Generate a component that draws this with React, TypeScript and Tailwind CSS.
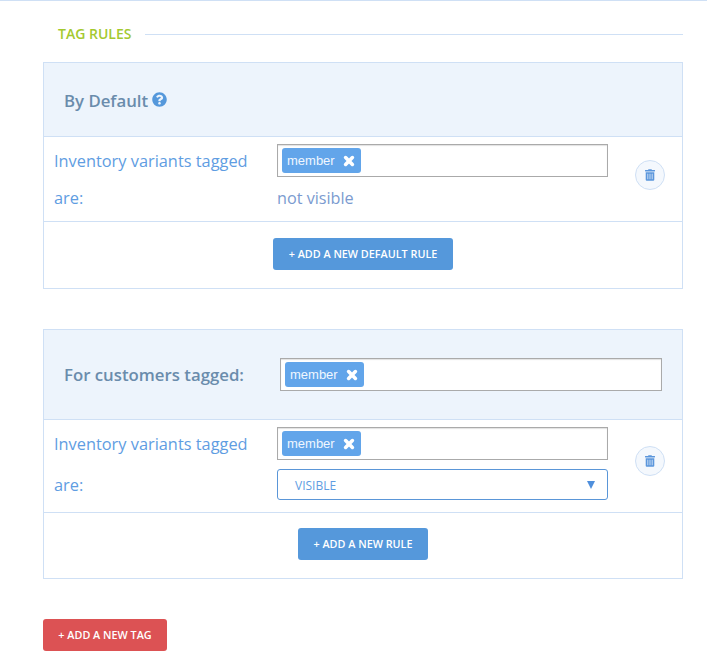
import { FaTrashAlt, FaQuestionCircle } from "react-icons/fa";

const OS = "font-['Open_Sans',sans-serif]";

function Tag() {
  return (
    <span className="flex h-[25px] w-[79px] items-center rounded-[3px] bg-[#62a5ea] pl-[5px] font-['Liberation_Sans',sans-serif] text-[13px] text-[#f0f7ff]">
      <span>member</span>
      <svg viewBox="0 0 12 12" className="ml-[8px] h-[12px] w-[12px]">
        <path d="M2.6 2.6 L9.4 9.4 M9.4 2.6 L2.6 9.4" stroke="#fff" strokeWidth="3.6" strokeLinecap="round" fill="none" />
      </svg>
    </span>
  );
}

function TagInput({ w }: { w: string }) {
  return (
    <div className={`flex h-[33px] items-center border border-[#aaaaaa] bg-white pl-1 shadow-[inset_0_1px_1px_rgba(0,0,0,0.12)] ${w}`}>
      <Tag />
    </div>
  );
}

function Trash() {
  return (
    <div className="flex h-[30px] w-[30px] items-center justify-center rounded-full border border-[#cfe0f5] bg-[#f4f8fd]">
      <FaTrashAlt className="mr-[1px] h-[12px] w-[10px] text-[#5b96dc]" />
    </div>
  );
}

function Btn({ label, w, red }: { label: string; w: string; red?: boolean }) {
  return (
    <button className={`flex h-8 items-center justify-center rounded-[3px] text-[10.8px] font-semibold text-white uppercase ${w} ${red ? "bg-[#dc5254]" : "bg-[#5598db]"}`}>
      {label}
    </button>
  );
}

export default function App() {
  return (
    <div className={`h-[662px] w-[707px] overflow-hidden border-t border-[#cfe0f5] bg-white ${OS}`}>
      <div className="flex h-[61px] items-start pl-[58px] pr-6 pt-[23px]">
        <span className="text-sm leading-5 font-semibold text-[#a4c92f]">TAG RULES</span>
        <div className="mt-[10px] ml-[14px] h-px flex-1 bg-[#cfe0f5]" />
      </div>

      <div className="ml-[43px] w-[640px] border border-[#cfe0f5]">
        <div className="flex h-[73px] items-center bg-[#edf4fc] pl-5">
          <span className="relative top-[1px] text-[16.8px] font-semibold text-[#6a8cac]">By Default</span>
          <FaQuestionCircle className="ml-[4px] h-[15px] w-[15px] text-[#5598db]" />
        </div>
        <div className="flex h-[85px] border-t border-[#cfe0f5] pl-[10px]">
          <div className="w-[223px] pt-[6px] text-[16.35px] leading-[37px] text-[#5f9de2]">
            Inventory variants tagged
            <br />
            are:
          </div>
          <div className="w-[331px] pt-[7px]">
            <TagInput w="w-[331px]" />
            <div className="mt-[3px] text-[16.2px] leading-[37px] text-[#7b9bd0]">not visible</div>
          </div>
          <div className="ml-[27px] pt-[23px]">
            <Trash />
          </div>
        </div>
        <div className="flex h-[67px] items-start justify-center border-t border-[#cfe0f5] pt-4">
          <Btn label="+ Add a new default rule" w="w-[180px]" />
        </div>
      </div>

      <div className="mt-10 ml-[43px] w-[640px] border border-[#cfe0f5]">
        <div className="flex h-[89px] items-center bg-[#edf4fc] pl-5">
          <span className="w-[216px] text-[16.8px] font-semibold text-[#6a8cac]">For customers tagged:</span>
          <TagInput w="w-[382px]" />
        </div>
        <div className="flex h-[93px] border-t border-[#cfe0f5] pl-[10px]">
          <div className="w-[223px] text-[16.35px] text-[#5f9de2]">
            <div className="pt-1 leading-[40px]">Inventory variants tagged</div>
            <div className="pt-[1px] leading-[41px]">are:</div>
          </div>
          <div className="w-[331px] pt-[7px]">
            <TagInput w="w-[331px]" />
            <div className="mt-[9px] flex h-[31px] items-center justify-between rounded-[3px] border border-[#5a96d8] pr-[12px] pl-[17px] text-xs text-[#5f9de2]">
              <span className="relative top-[1px]">VISIBLE</span>
              <svg viewBox="0 0 8 8" className="h-[8px] w-[8px]">
                <path d="M0 0 H8 L4 8 Z" fill="#4f8fdc" />
              </svg>
            </div>
          </div>
          <div className="ml-[27px] pt-[26px]">
            <Trash />
          </div>
        </div>
        <div className="flex h-[66px] items-start justify-center border-t border-[#cfe0f5] pt-[15px]">
          <Btn label="+ Add a new rule" w="w-[130px]" />
        </div>
      </div>

      <div className="mt-10 ml-[43px]">
        <Btn label="+ Add a new tag" w="w-[124px]" red />
      </div>
    </div>
  );
}
